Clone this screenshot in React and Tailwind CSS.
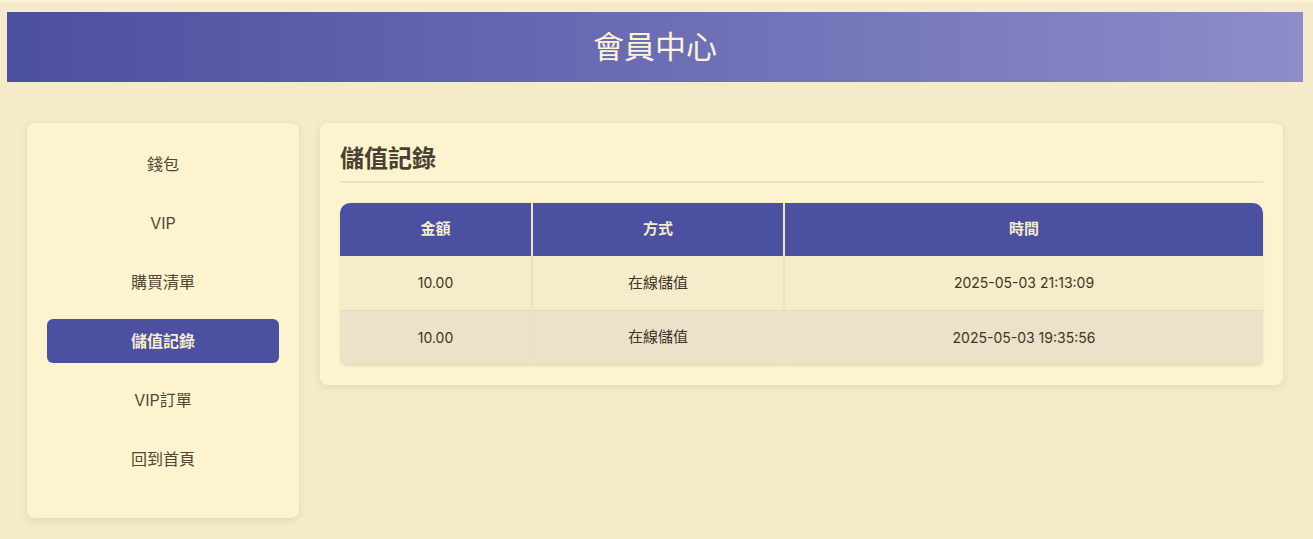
// 會員中心 - 儲值記錄頁
const FONT = { fontFamily: '"Inter", "Noto Sans CJK TC", sans-serif' };

const MENU = ['錢包', 'VIP', '購買清單', '儲值記錄', 'VIP訂單', '回到首頁'];
const ROWS = [
  { amount: '10.00', method: '在線儲值', time: '2025-05-03 21:13:09' },
  { amount: '10.00', method: '在線儲值', time: '2025-05-03 19:35:56' },
];

function Sidebar({ active }) {
  return (
    <aside className="w-[272px] shrink-0 self-start rounded-lg bg-[#fdf3cf] px-5 pt-[19px] pb-[22px] shadow-[0_2px_8px_rgba(150,120,60,0.18)]">
      {MENU.map((m) => (
        <div
          key={m}
          className={`mb-[15px] flex h-[44px] items-center justify-center rounded-md text-[16px] ${
            m === active ? 'bg-[#4c50a0] font-bold text-[#f6ecce]' : 'text-[#4f4838]'
          }`}
        >
          {m}
        </div>
      ))}
    </aside>
  );
}

function RecordTable() {
  return (
    <div className="mt-5 overflow-hidden rounded-t-[10px] rounded-b-md shadow-[0_1px_3px_rgba(150,120,60,0.15)]">
      <table className="w-full border-collapse text-center text-[15px]">
        <thead>
          <tr className="h-[53px] bg-[#4c50a0] font-bold text-[#f6ecce]">
            <th className="w-[192px] border-r-2 border-[#f0e6c4]">金額</th>
            <th className="w-[252px] border-r-2 border-[#f0e6c4]">方式</th>
            <th>時間</th>
          </tr>
        </thead>
        <tbody className="text-[#3b3528]">
          {ROWS.map((r, i) => (
            <tr key={i} className={`h-[54px] border-b border-[#e5d9b3] ${i % 2 ? 'bg-[#ebe2c9]' : 'bg-[#f6ebca]'}`}>
              <td className="border-r-2 border-[#ece2c2] text-[14px]">{r.amount}</td>
              <td className="border-r-2 border-[#ece2c2]">{r.method}</td>
              <td className="text-[14px]">{r.time}</td>
            </tr>
          ))}
        </tbody>
      </table>
    </div>
  );
}

export default function App() {
  return (
    <div className="min-h-[539px] border-t-2 border-[#fcf3d2] bg-[#f5ebca]" style={FONT}>
      <div className="ml-[7px] mr-[10px] pt-[10px]">
        <header className="flex h-[70px] items-center justify-center bg-gradient-to-r from-[#4b4f9f] to-[#8e8cc9]">
          <h1 className="text-[31px] font-normal text-[#fdf3d6]">會員中心</h1>
        </header>
        <div className="flex gap-[21px] px-5 pt-[41px]">
          <Sidebar active="儲值記錄" />
          <main className="flex-1 self-start rounded-lg bg-[#fdf3cf] p-5 shadow-[0_2px_8px_rgba(150,120,60,0.18)]">
            <h2 className="border-b-2 border-[#ede2c0] pb-[6px] text-[24px] leading-[32px] font-bold text-[#474132]">
              儲值記錄
            </h2>
            <RecordTable />
          </main>
        </div>
      </div>
    </div>
  );
}
